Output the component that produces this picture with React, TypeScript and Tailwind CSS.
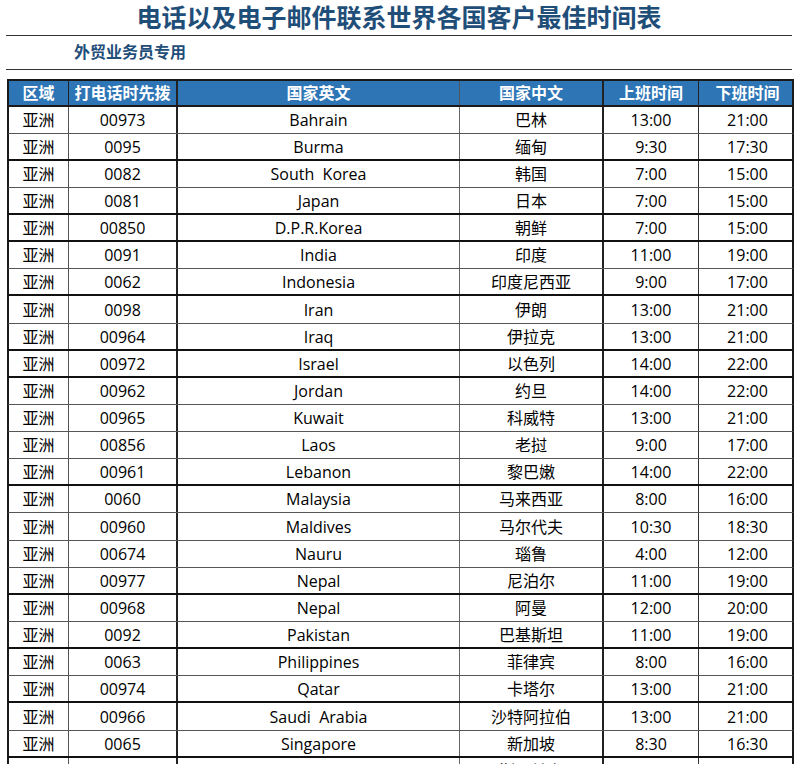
import React from "react";

const rows: [string, string, string, string, string][] = [
  ["00973", "Bahrain", "巴林", "13:00", "21:00"],
  ["0095", "Burma", "缅甸", "9:30", "17:30"],
  ["0082", "South  Korea", "韩国", "7:00", "15:00"],
  ["0081", "Japan", "日本", "7:00", "15:00"],
  ["00850", "D.P.R.Korea", "朝鲜", "7:00", "15:00"],
  ["0091", "India", "印度", "11:00", "19:00"],
  ["0062", "Indonesia", "印度尼西亚", "9:00", "17:00"],
  ["0098", "Iran", "伊朗", "13:00", "21:00"],
  ["00964", "Iraq", "伊拉克", "13:00", "21:00"],
  ["00972", "Israel", "以色列", "14:00", "22:00"],
  ["00962", "Jordan", "约旦", "14:00", "22:00"],
  ["00965", "Kuwait", "科威特", "13:00", "21:00"],
  ["00856", "Laos", "老挝", "9:00", "17:00"],
  ["00961", "Lebanon", "黎巴嫩", "14:00", "22:00"],
  ["0060", "Malaysia", "马来西亚", "8:00", "16:00"],
  ["00960", "Maldives", "马尔代夫", "10:30", "18:30"],
  ["00674", "Nauru", "瑙鲁", "4:00", "12:00"],
  ["00977", "Nepal", "尼泊尔", "11:00", "19:00"],
  ["00968", "Nepal", "阿曼", "12:00", "20:00"],
  ["0092", "Pakistan", "巴基斯坦", "11:00", "19:00"],
  ["0063", "Philippines", "菲律宾", "8:00", "16:00"],
  ["00974", "Qatar", "卡塔尔", "13:00", "21:00"],
  ["00966", "Saudi  Arabia", "沙特阿拉伯", "13:00", "21:00"],
  ["0065", "Singapore", "新加坡", "8:30", "16:30"],
  ["0094", "Sri Lanka", "斯里兰卡", "8:30", "16:30"],
];

const thick = new Set([1, 3, 4, 6, 8, 9, 13, 17, 19, 21, 23]);
const tall = new Set([7, 15, 22]);

export default function App() {
  const font = { fontFamily: '"Open Sans", "Noto Sans CJK SC", sans-serif' };
  return (
    <div className="w-[798px] h-[764px] overflow-hidden bg-white text-black" style={font}>
      <div className="mx-[6px] border-b border-[#333]">
        <div className="h-[35px] flex items-center justify-center text-[25px] font-bold text-[#1f4e79] leading-none">
          电话以及电子邮件联系世界各国客户最佳时间表
        </div>
      </div>
      <div className="mx-[6px] border-b border-[#333] h-[34px] flex items-center pl-[68px] pb-[2px] text-[16px] font-bold text-[#1f4e79]">
        外贸业务员专用
      </div>
      <div className="ml-[7px] mt-[9px] w-[787px]">
        <div className="grid grid-cols-[60px_109px_282px_144px_95px_97px] h-[28px] bg-[#2e75b6] border-2 border-[#1a1a1a] text-white font-bold text-[16px]">
          <div className="flex items-center justify-center border-r border-[#222]">区域</div>
          <div className="flex items-center justify-center border-r-2 border-[#222]">打电话时先拨</div>
          <div className="flex items-center justify-center border-r border-[#555]">国家英文</div>
          <div className="flex items-center justify-center border-r-2 border-[#222]">国家中文</div>
          <div className="flex items-center justify-center border-r border-[#222]">上班时间</div>
          <div className="flex items-center justify-center">下班时间</div>
        </div>
        {rows.map((r, i) => (
          <div
            key={i}
            className={
              "grid grid-cols-[60px_109px_282px_144px_95px_97px] border-x-2 border-[#1a1a1a] text-[16px] " +
              (tall.has(i) ? "h-[28px] " : "h-[27px] ") +
              (thick.has(i) ? "border-b-2 border-b-[#111]" : "border-b border-b-[#555]")
            }
          >
            <div className="flex items-center justify-center border-r border-[#555]">亚洲</div>
            <div className="flex items-center justify-center border-r-2 border-[#222]">{r[0]}</div>
            <div className="flex items-center justify-center border-r border-[#666] whitespace-pre">{r[1]}</div>
            <div className="flex items-center justify-center border-r-2 border-[#222]">{r[2]}</div>
            <div className="flex items-center justify-center border-r border-[#333]">{r[3]}</div>
            <div className="flex items-center justify-center">{r[4]}</div>
          </div>
        ))}
      </div>
    </div>
  );
}
